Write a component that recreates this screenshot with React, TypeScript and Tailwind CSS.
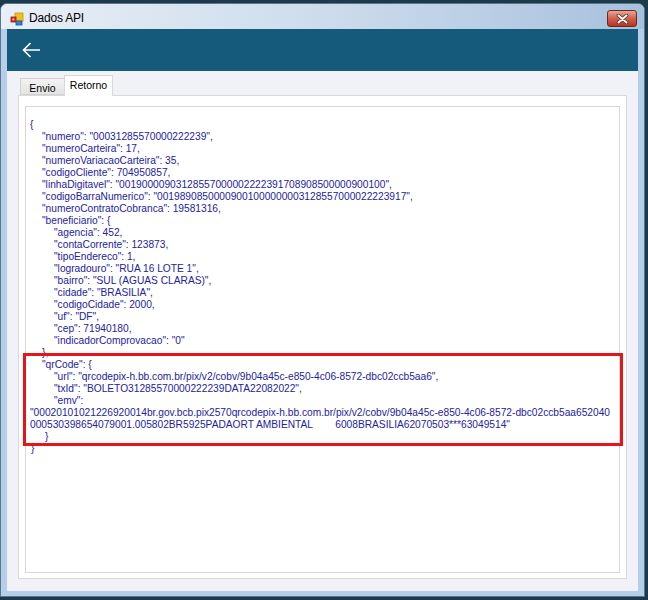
import React from "react";

const L: [number, string][] = [
  [0, "{"],
  [12, '"numero": "00031285570000222239",'],
  [12, '"numeroCarteira": 17,'],
  [12, '"numeroVariacaoCarteira": 35,'],
  [12, '"codigoCliente": 704950857,'],
  [12, '"linhaDigitavel": "00190000903128557000002222391708908500000900100",'],
  [12, '"codigoBarraNumerico": "00198908500009001000000003128557000022223917",'],
  [12, '"numeroContratoCobranca": 19581316,'],
  [12, '"beneficiario": {'],
  [24, '"agencia": 452,'],
  [24, '"contaCorrente": 123873,'],
  [24, '"tipoEndereco": 1,'],
  [24, '"logradouro": "RUA 16 LOTE 1",'],
  [24, '"bairro": "SUL (AGUAS CLARAS)",'],
  [24, '"cidade": "BRASILIA",'],
  [24, '"codigoCidade": 2000,'],
  [24, '"uf": "DF",'],
  [24, '"cep": 71940180,'],
  [24, '"indicadorComprovacao": "0"'],
  [12, "},"],
  [12, '"qrCode": {'],
  [24, '"url": "qrcodepix-h.bb.com.br/pix/v2/cobv/9b04a45c-e850-4c06-8572-dbc02ccb5aa6",'],
  [24, '"txId": "BOLETO31285570000222239DATA22082022",'],
  [24, '"emv":'],
  [0, '"00020101021226920014br.gov.bcb.pix2570qrcodepix-h.bb.com.br/pix/v2/cobv/9b04a45c-e850-4c06-8572-dbc02ccb5aa652040'],
  [0, '000530398654079001.005802BR5925PADAORT AMBIENTAL        6008BRASILIA62070503***63049514"'],
  [15, "}"],
  [1, "}"],
];

function AppIcon() {
  return (
    <svg width="14" height="14" viewBox="0 0 14 14">
      <rect x="5" y="1" width="8" height="8" fill="#f2c21b" stroke="#c7901a" strokeWidth="0.8" />
      <rect x="1" y="5" width="5" height="5" fill="#d8322a" stroke="#8a1a14" strokeWidth="0.8" />
      <rect x="2.6" y="6.6" width="1.6" height="1.6" fill="#ffd7d0" />
      <rect x="6" y="9" width="6" height="4" fill="#3f7fd0" stroke="#1f4f96" strokeWidth="0.8" />
    </svg>
  );
}

export default function App() {
  return (
    <div className="relative w-[648px] h-[600px] overflow-hidden bg-[#1c3a49] pt-[3px] font-['Liberation_Sans',Arial,sans-serif]">
      <div className="w-[645px] h-[594px] flex flex-col rounded-t-[7px] border border-[#58768e] bg-[#b6cee8] overflow-hidden">
        {/* title bar */}
        <div className="h-[25px] flex items-start bg-gradient-to-r from-[#e9eff6] via-[#cddcec] to-[#a7c1dd]">
          <div className="ml-[9px] mt-[8px]">
            <AppIcon />
          </div>
          <div className="ml-[5px] mt-[7px] text-[12px] leading-[14px] tracking-[-0.2px] text-black">Dados API</div>
          <div className="ml-auto mr-[7px] mt-[6px] w-[30px] h-[17px] rounded-[3px] border border-[#6b2a24] bg-gradient-to-b from-[#e6a597] via-[#d0604c] to-[#b8321f] flex items-center justify-center">
            <svg width="13" height="10" viewBox="0 0 13 10">
              <path d="M2.5 1.5 L10.5 8.5 M10.5 1.5 L2.5 8.5" stroke="#5a2a26" strokeWidth="3.6" strokeLinecap="round" />
              <path d="M2.5 1.5 L10.5 8.5 M10.5 1.5 L2.5 8.5" stroke="#ffffff" strokeWidth="2" strokeLinecap="round" />
            </svg>
          </div>
        </div>
        {/* client */}
        <div className="mx-[6px] mb-[5px] flex-1 flex flex-col bg-[#f1f2f8]">
          <div className="h-[42px] flex items-center bg-[#165a7b] pl-[15px]">
            <svg width="19" height="16" viewBox="0 0 19 16">
              <path d="M18 8 H1.5 M8.5 1 L1.5 8 L8.5 15" fill="none" stroke="#ffffff" strokeWidth="1.6" />
            </svg>
          </div>
          <div className="flex-1 flex flex-col px-[11px] pt-[5px] pb-[12px]">
            <div className="h-[19px] flex items-end pl-[2px] text-[10.5px] text-black">
              <div className="w-[45px] h-[17px] border border-[#d2d2d2] bg-gradient-to-b from-[#f2f2f2] to-[#e4e4e4] flex items-center justify-center leading-[12px] pt-[2px]">
                Envio
              </div>
              <div className="relative z-10 -ml-px -mb-px w-[49px] h-[21px] border border-b-0 border-[#d9d9d9] bg-white flex items-start justify-center leading-[12px] pt-[3px]">
                Retorno
              </div>
            </div>
            <div className="flex-1 flex flex-col border border-[#d9d9d9] bg-white px-[6px] pt-[10px] pb-[5px]">
              <div className="flex-1 border border-[#d7d7d7] bg-white pl-[4px] pt-[12px] text-[10.2px] leading-[12px] text-[#2222a0]">
                {L.map(([ind, t], i) => (
                  <div key={i} className="whitespace-pre h-[12px]" style={{ paddingLeft: ind }}>
                    {t}
                  </div>
                ))}
              </div>
            </div>
          </div>
        </div>
      </div>
      {/* annotation box */}
      <div className="absolute left-[23px] top-[353px] w-[600px] h-[93px] border-[3px] border-[#e8141c]" />
    </div>
  );
}
